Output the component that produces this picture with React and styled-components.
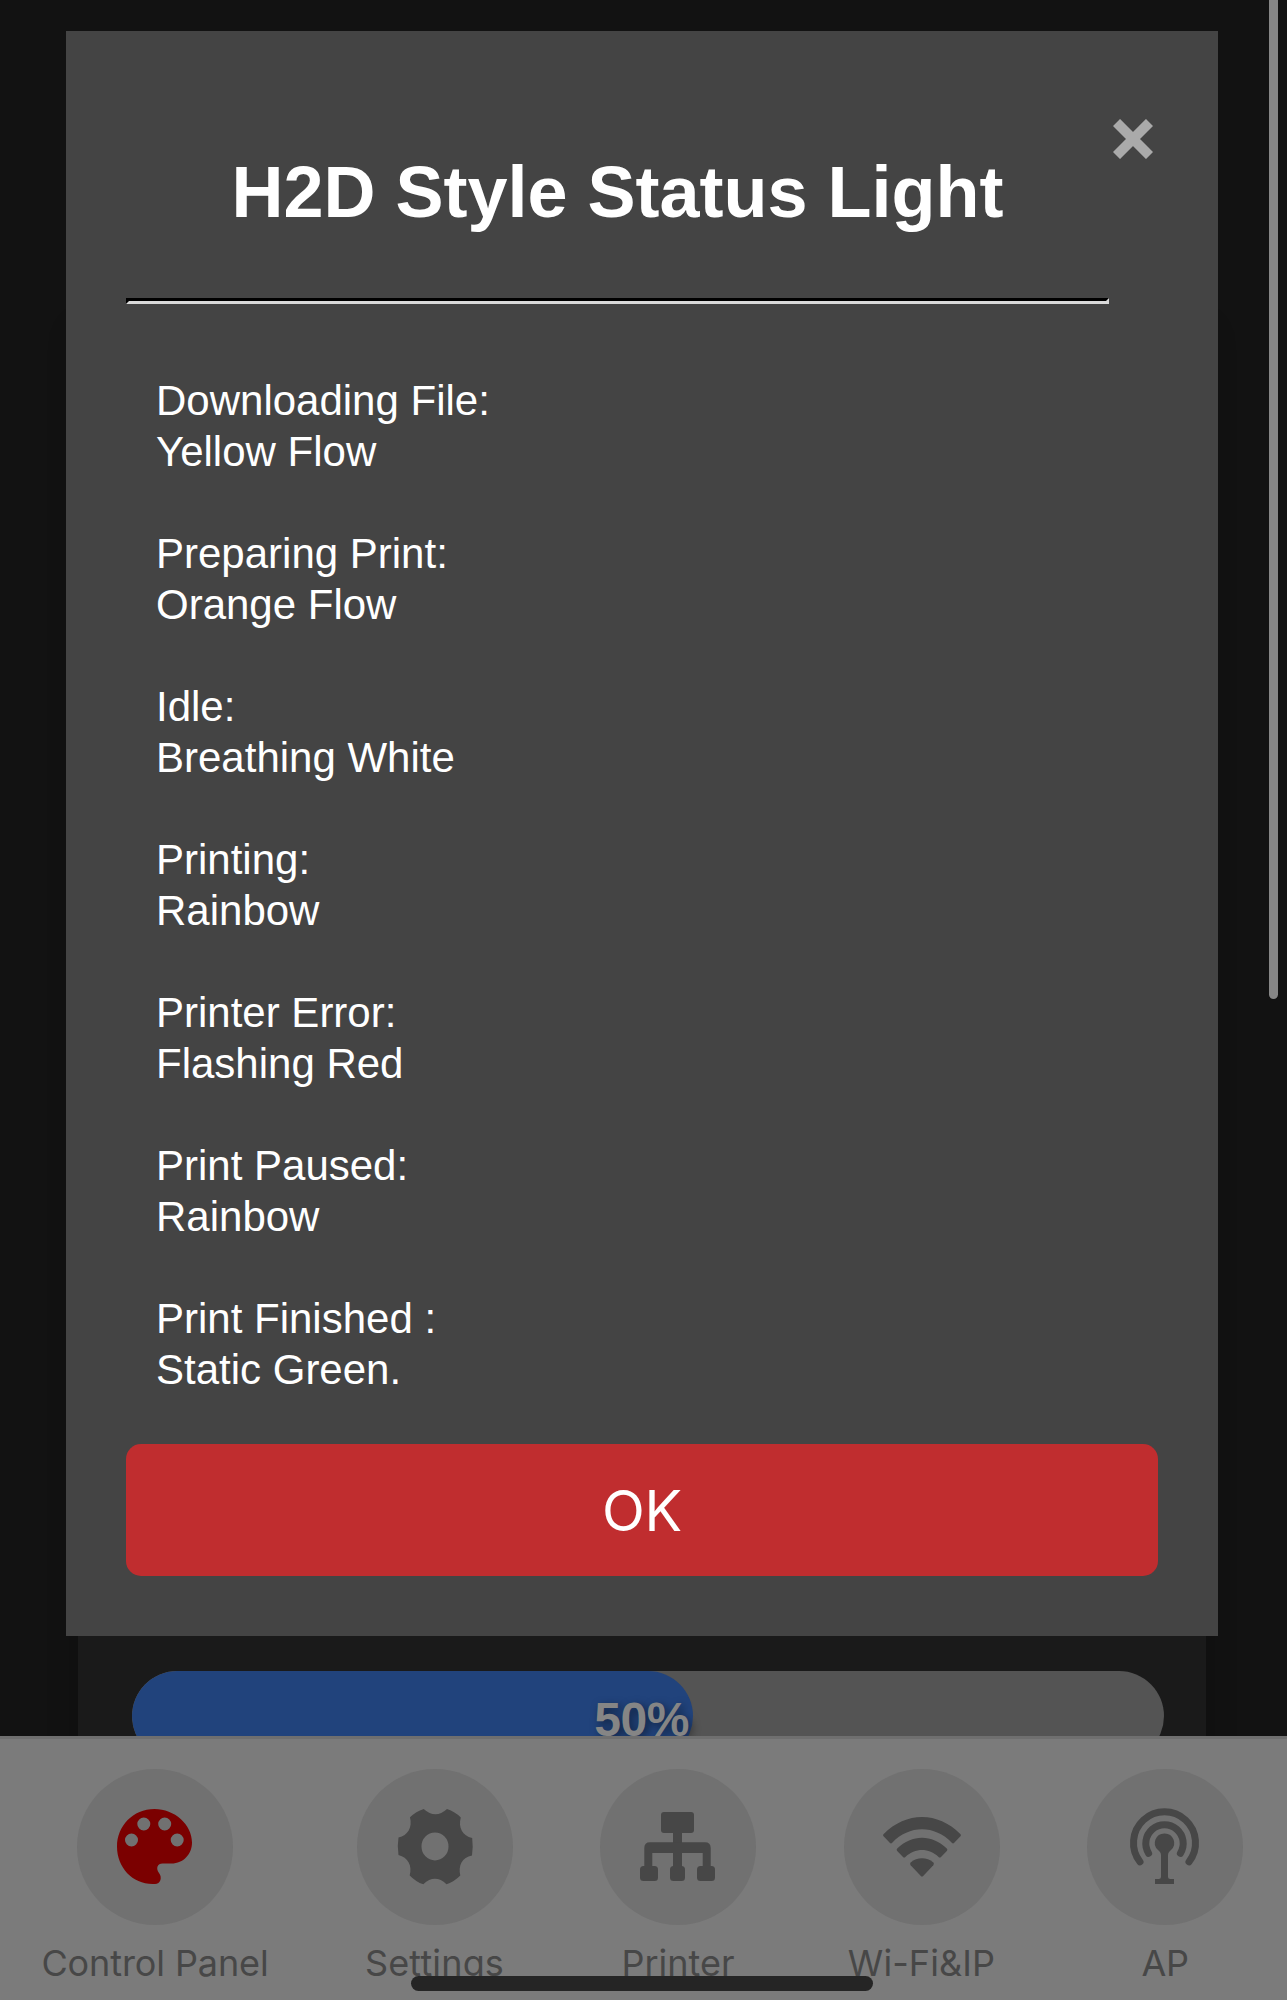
import React from "react";
import styled, { createGlobalStyle } from "styled-components";

const Global = createGlobalStyle`
  body { margin: 0; background: #fff; overflow: hidden; }
  *, *::before, *::after { box-sizing: border-box; }
`;

const Screen = styled.div`
  position: relative;
  display: flex;
  flex-direction: column;
  width: 1287px;
  height: 2000px;
  background: #121212;
  overflow: hidden;
  font-family: "Liberation Sans", Arial, sans-serif;
`;

const Page = styled.main`
  height: 1736px;
  padding: 0 81px 0 78px;
  overflow: hidden;
`;

const Card = styled.section`
  height: 1800px;
  margin-top: 330px;
  padding: 1341px 42px 0 54px;
  background: #1a1a1a;
  box-shadow: 0 0 30px rgba(0, 0, 0, 0.2);
`;

const Slider = styled.div`
  height: 90px;
  border-radius: 45px;
  background: #545454;
  overflow: hidden;
`;

const SliderFill = styled.div`
  display: flex;
  justify-content: flex-end;
  width: 561px;
  height: 90px;
  padding: 21px 4px 0 0;
  border-radius: 45px;
  background: #21437c;
`;

const SliderValue = styled.span`
  color: #858585;
  font-size: 48px;
  line-height: 56px;
  font-weight: 700;
  letter-spacing: -0.4px;
  text-shadow: 3px 3px 9px rgba(0, 0, 0, 0.5);
`;

const Dialog = styled.section`
  position: absolute;
  top: 31px;
  left: 66px;
  width: 1152px;
  height: 1605px;
  padding: 60px;
  background: #444;
  color: #fff;
`;

const DialogHead = styled.header`
  display: flex;
  height: 207px;
  padding-top: 60px;
`;

const Title = styled.h2`
  flex: 0 0 983px;
  margin: 0;
  text-align: center;
  font-size: 72px;
  line-height: 83px;
  font-weight: 700;
  white-space: nowrap;
`;

const Close = styled.button`
  width: 40px;
  height: 50px;
  margin: -37px 0 0 3.500px;
  padding: 0;
  border: 0;
  background: none;
  color: #aaa;
  svg { display: block; }
`;

const Rule = styled.hr`
  width: 983px;
  height: 6px;
  margin: 0;
  border: 3px inset #dadada;
  border-color: #000 #dadada #dadada #222;
`;

const StatusList = styled.dl`
  display: flex;
  flex-direction: column;
  gap: 51px;
  height: 1140px;
  margin: 0;
  padding: 71px 30px 0;
  font-size: 42px;
  line-height: 51px;
`;

const StatusRow = styled.div`
  dt, dd { margin: 0; }
`;

const OkButton = styled.button`
  display: block;
  width: 100%;
  height: 132px;
  padding: 2px 0 0;
  border: 0;
  border-radius: 15px;
  background: #c02d2f;
  color: #fff;
  font-family: Inter, sans-serif;
  font-size: 56px;
  letter-spacing: -0.3px;
`;

const ScrollThumb = styled.div`
  position: absolute;
  top: -20px;
  left: 1269px;
  width: 9px;
  height: 1019px;
  border-radius: 5px;
  background: #868686;
`;

const TabBar = styled.nav`
  display: flex;
  justify-content: space-between;
  height: 264px;
  padding: 30px 44px 0 41px;
  border-top: 3px solid #6f6f6f;
  background: #7b7b7b;
`;

const Tab = styled.a`
  display: flex;
  flex-direction: column;
  align-items: center;
  width: ${(p) => p.$width}px;
  color: ${(p) => (p.$active ? "#7b0000" : "#474747")};
`;

const TabDisc = styled.span`
  display: grid;
  place-items: center;
  width: 156px;
  height: 156px;
  border-radius: 50%;
  background: #717171;
`;

const TabLabel = styled.span`
  margin-top: 16px;
  color: #474747;
  font-family: Inter, sans-serif;
  font-size: 36px;
  line-height: 44px;
  letter-spacing: ${(p) => p.$spacing}px;
  white-space: nowrap;
`;

const HomeIndicator = styled.div`
  position: absolute;
  top: 1976px;
  left: 411px;
  width: 462px;
  height: 15px;
  border-radius: 8px;
  background: #252525;
`;

const PaletteIcon = () => (
  <svg width="78" height="78" viewBox="0.5 0.5 78 78" fill="currentColor">
    <path fillRule="evenodd" d="M39 1.5C17.500 1.500 1.500 18.500 1.500 39C1.500 60 17 76.500 37 76.500H39.500C45 76.500 47 70 43.500 65.500C40 61 42 56 47 56H56C68 56 76.500 46.500 76.500 35C76.500 17 59 1.500 39 1.500ZM16 26a6.500 6.500 0 1 1 0 13a6.500 6.500 0 0 1 0-13ZM28.300 10a6.500 6.500 0 1 1 0 13a6.500 6.500 0 0 1 0-13ZM49.200 10a6.500 6.500 0 1 1 0 13a6.500 6.500 0 0 1 0-13ZM61.700 26a6.500 6.500 0 1 1 0 13a6.500 6.500 0 0 1 0-13Z" />
  </svg>
);

const GearIcon = () => (
  <svg width="78" height="78" viewBox="0 0.600 78 78" fill="currentColor">
    <path fillRule="evenodd" d="M27.700 1.500Q39.500 12 51 1.500Q59 4 64.800 10C62 20 66.500 28.500 76.200 30.500Q77.300 39 76 48C66 50 62 58 64.300 68Q58.500 74 50.500 76.800Q39 66 27.300 76.800Q20 74.500 13.700 68C16.500 58 12 50 2.500 47.500Q1 39 2.500 30C12 28 16.500 20 14 9.800Q20 4 27.700 1.500ZM39 25a13.500 14 0 1 0 0 28a13.500 14 0 1 0 0-28Z" />
  </svg>
);

const NetworkIcon = () => (
  <svg width="78" height="78" viewBox="0 0 78 78" fill="currentColor">
    <rect x="22" y="4" width="33" height="21" rx="3" />
    <rect x="34" y="22" width="9" height="40" />
    <path d="M5.300 61V40Q5.300 34.300 11 34.300H66Q71.700 34.300 71.700 40V61H63.700V45H13.300V61Z" />
    <rect x="1" y="58" width="18" height="15" rx="3.500" />
    <rect x="31" y="58" width="15" height="15" rx="3.500" />
    <rect x="58" y="58" width="18" height="15" rx="3.500" />
  </svg>
);

const WifiIcon = () => (
  <svg width="78" height="78" viewBox="0 0 78 78" fill="currentColor">
    <path d="M.7 26Q-.5 27.200 .8 28.600L7 35Q8 36 9.200 34.800C26 16.800 52 16.800 68.800 34.800Q70 36 71 35L77.200 28.600Q78.500 27.200 77.300 26C55 3.300 23 3.300 .7 26Z" />
    <path d="M14.200 40.500Q13 41.700 14.200 43L20 49Q21.200 50.200 22.400 49C32 39.700 46 39.700 55.600 49Q56.800 50.200 58 49L63.800 43Q65 41.700 63.800 40.500C49 26 29 26 14.200 40.500Z" />
    <path d="M27.700 54.500Q26.400 55.800 27.700 57.200L37.800 68Q39 69.200 40.200 68L50.300 57.200Q51.600 55.800 50.300 54.500C44 48.900 34 48.900 27.700 54.500Z" />
  </svg>
);

const AntennaIcon = () => (
  <svg width="78" height="78" viewBox="0 0 78 78" fill="none" stroke="currentColor" strokeWidth="7" strokeLinecap="round">
    <path d="M14 53.800A31 31 0 1 1 63 53.800" />
    <path d="M22.600 45.300A18.700 18.700 0 1 1 54.400 45.300" />
    <path fill="currentColor" stroke="none" d="M38.500 25.400A9.500 9.500 0 0 0 32 42C34 43.800 35 45 35 47.500V68.500Q35 71 32.500 71H29V76H48V71H44.500Q42 71 42 68.500V47.500C42 45 43 43.800 45 42A9.500 9.500 0 0 0 38.500 25.400Z" />
  </svg>
);

const statuses = [
  ["Downloading File:", "Yellow Flow"],
  ["Preparing Print:", "Orange Flow"],
  ["Idle:", "Breathing White"],
  ["Printing:", "Rainbow"],
  ["Printer Error:", "Flashing Red"],
  ["Print Paused:", "Rainbow"],
  ["Print Finished :", "Static Green."],
];

const tabs = [
  { label: "Control Panel", Icon: PaletteIcon, width: 228, spacing: -0.1, active: true },
  { label: "Settings", Icon: GearIcon, width: 156, spacing: 0.15 },
  { label: "Printer", Icon: NetworkIcon, width: 156, spacing: 0 },
  { label: "Wi-Fi&IP", Icon: WifiIcon, width: 156, spacing: 0.1 },
  { label: "AP", Icon: AntennaIcon, width: 156, spacing: -0.5 },
];

export default function App() {
  return (
    <Screen>
      <Global />
      <Page>
        <Card>
          <Slider>
            <SliderFill>
              <SliderValue>50%</SliderValue>
            </SliderFill>
          </Slider>
        </Card>
      </Page>
      <TabBar>
        {tabs.map(({ label, Icon, width, spacing, active }) => (
          <Tab key={label} $width={width} $active={active}>
            <TabDisc><Icon /></TabDisc>
            <TabLabel $spacing={spacing}>{label}</TabLabel>
          </Tab>
        ))}
      </TabBar>
      <Dialog role="dialog">
        <DialogHead>
          <Title>H2D Style Status Light</Title>
          <Close aria-label="Close">
            <svg width="40" height="40" viewBox="0 0 40 40" stroke="currentColor" strokeWidth="10">
              <path d="M3.500 3.500L36.500 36.500M36.500 3.500L3.500 36.500" />
            </svg>
          </Close>
        </DialogHead>
        <Rule />
        <StatusList>
          {statuses.map(([state, effect]) => (
            <StatusRow key={state}>
              <dt>{state}</dt>
              <dd>{effect}</dd>
            </StatusRow>
          ))}
        </StatusList>
        <OkButton>OK</OkButton>
      </Dialog>
      <ScrollThumb />
      <HomeIndicator />
    </Screen>
  );
}
